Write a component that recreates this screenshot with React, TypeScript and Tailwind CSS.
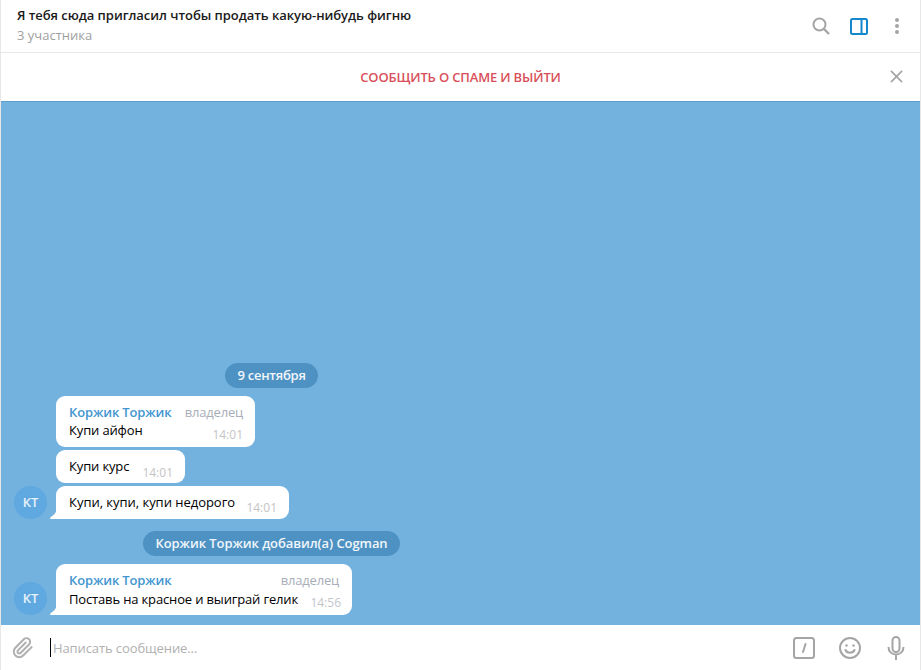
function Tail() {
  return (
    <svg className="absolute bottom-0 left-[-6px]" width="7" height="10" viewBox="0 0 7 10">
      <path d="M7 0 V10 H1.5 C0 10 -0.3 9 0.6 8.3 C4 6 6 4 7 0 Z" fill="#fff" />
    </svg>
  );
}

function Avatar() {
  return (
    <div className="flex h-[33px] w-[33px] shrink-0 items-center justify-center rounded-full bg-[#5fa8e0] pt-px text-[13px] font-semibold text-[#e8f3fb]">
      КТ
    </div>
  );
}

function Pill({ children, className = "" }: { children: React.ReactNode; className?: string }) {
  return (
    <div className={`flex h-[25px] items-center rounded-full bg-[#4e92c3] px-3 text-[13px] font-semibold text-[#f0f6fb] ${className}`}>
      {children}
    </div>
  );
}

function NameRow() {
  return (
    <div className="flex h-[19px] items-center justify-between text-[13px] leading-[19px]">
      <span className="font-semibold tracking-[-0.15px] text-[#3f96d0]">Коржик Торжик</span>
      <span className="tracking-[-0.2px] text-[#a8aeb8]">владелец</span>
    </div>
  );
}

export default function App() {
  return (
    <div className="flex h-[670px] w-[921px] flex-col overflow-hidden border-x border-[#e7e7e7] bg-white font-['Open_Sans',sans-serif]">
      {/* Header */}
      <div className="flex h-[53px] shrink-0 items-center justify-between border-b border-[#e7e7e7] pl-[15px] pr-[15px]">
        <div className="pb-[4px] pl-px">
          <div className="text-[13px] font-semibold leading-[20px] tracking-[-0.05px] text-[#1a1a1a]">
            Я тебя сюда пригласил чтобы продать какую-нибудь фигню
          </div>
          <div className="mt-[1px] text-[13px] leading-[18px] text-[#a0a0a0]">3 участника</div>
        </div>
        <div className="flex items-center gap-[19px]">
          <svg width="20" height="20" viewBox="0 0 20 20" fill="none" stroke="#a5a5a5" strokeWidth="2">
            <circle cx="8.5" cy="8.5" r="6" />
            <path d="M13 13 L18 18" strokeWidth="2.4" />
          </svg>
          <svg width="18" height="17" viewBox="0 0 18 17" fill="none" stroke="#1488cc" strokeWidth="2">
            <rect x="1" y="1" width="16" height="15" rx="1.5" />
            <path d="M11.5 1 V16" />
          </svg>
          <svg className="ml-[2px]" width="16" height="18" viewBox="0 0 16 18" fill="#a5a5a5">
            <circle cx="8" cy="3" r="2" />
            <circle cx="8" cy="9" r="2" />
            <circle cx="8" cy="15" r="2" />
          </svg>
        </div>
      </div>

      {/* Spam banner */}
      <div className="relative flex h-[48px] shrink-0 items-center justify-center">
        <span className="pt-[1px] text-[13px] font-semibold tracking-[-0.16px] text-[#d9505a]">СООБЩИТЬ О СПАМЕ И ВЫЙТИ</span>
        <svg className="absolute right-[17px] top-[17px]" width="13" height="13" viewBox="0 0 14 14" stroke="#a5a5a5" strokeWidth="1.8">
          <path d="M1 1 L13 13 M13 1 L1 13" />
        </svg>
      </div>

      {/* Chat */}
      <div className="flex min-h-0 flex-1 flex-col justify-end border-t border-[#5f9cc9] bg-[#73b2df] pb-[10px]">
        <div className="flex w-[541px] flex-col items-center">
          <Pill className="tracking-[-0.25px]">9 сентября</Pill>

          <div className="mt-2 flex w-full flex-col items-start gap-[3px] pl-[55px]">
            <div className="h-[51px] w-[199px] rounded-[9px] bg-white pl-[13px] pr-[12px] pt-[7px]">
              <NameRow />
              <div className="relative mt-[-1px] text-[13px] leading-[18px] tracking-[-0.15px] text-black">
                Купи айфон
                <span className="absolute right-0 top-[5px] text-[12px] tracking-normal text-[#c4c4c4]">14:01</span>
              </div>
            </div>
            <div className="flex h-[33px] w-[129px] items-start justify-between rounded-[9px] bg-white pl-[13px] pr-[12px] pt-[7px] text-[13px] leading-[18px] tracking-[-0.15px] text-black">
              <span>Купи курс</span>
              <span className="mt-[7px] text-[12px] leading-[18px] tracking-normal text-[#c4c4c4]">14:01</span>
            </div>
          </div>

          <div className="mt-[3px] flex w-full items-end gap-[9px] pl-[13px]">
            <Avatar />
            <div className="relative flex h-[33px] w-[233px] items-start justify-between rounded-[9px] rounded-bl-none bg-white pl-[13px] pr-[12px] pt-[7px] text-[13px] leading-[18px] tracking-[-0.03px] text-black">
              <Tail />
              <span>Купи, купи, купи недорого</span>
              <span className="mt-[6px] text-[12px] leading-[18px] tracking-normal text-[#c4c4c4]">14:01</span>
            </div>
          </div>

          <div className="mt-3">
            <Pill className="tracking-[-0.08px]">Коржик Торжик добавил(а) Cogman</Pill>
          </div>

          <div className="mt-2 flex w-full items-end gap-[9px] pl-[13px]">
            <Avatar />
            <div className="relative h-[51px] w-[296px] rounded-[9px] rounded-bl-none bg-white pl-[13px] pr-[13px] pt-[7px]">
              <Tail />
              <NameRow />
              <div className="relative text-[13px] leading-[18px] tracking-[-0.15px] text-black">
                Поставь на красное и выиграй гелик
                <span className="absolute right-[-2px] top-[4px] text-[12px] tracking-normal text-[#bfc5cc]">14:56</span>
              </div>
            </div>
          </div>
        </div>
      </div>

      {/* Composer */}
      <div className="flex h-[45px] shrink-0 items-center justify-between pl-[11px] pr-[15px]">
        <div className="flex items-center">
          <svg width="22" height="24" viewBox="0 0 24 24" fill="none" stroke="#b0b0b0" strokeWidth="2.2" strokeLinecap="round" strokeLinejoin="round">
            <path d="M21.4 11.05 12.2 20.25a6 6 0 0 1-8.5-8.5l9.2-9.2a4 4 0 0 1 5.66 5.66l-9.2 9.2a2 2 0 0 1-2.83-2.83l8.5-8.5" />
          </svg>
          <div className="ml-[16px] h-[19px] w-px bg-black" />
          <span className="ml-[2px] pt-[2px] text-[13px] tracking-[-0.1px] text-[#b0b0b0]">Написать сообщение...</span>
        </div>
        <div className="flex items-center">
          <svg width="22" height="22" viewBox="0 0 22 22" fill="none" stroke="#a5a5a5" strokeWidth="2">
            <rect x="1" y="1" width="20" height="20" rx="2.5" />
            <path d="M12.5 7 L10 15" strokeLinecap="round" />
          </svg>
          <svg className="ml-[24px]" width="22" height="22" viewBox="0 0 22 22" fill="none" stroke="#a5a5a5" strokeWidth="2">
            <circle cx="11" cy="11" r="10" />
            <circle cx="7.5" cy="8.5" r="1.2" fill="#a5a5a5" stroke="none" />
            <circle cx="14.5" cy="8.5" r="1.2" fill="#a5a5a5" stroke="none" />
            <path d="M6.5 13 C8 16.5 14 16.5 15.5 13" strokeLinecap="round" />
          </svg>
          <svg className="ml-[26px]" width="18" height="24" viewBox="0 0 18 24" fill="none" stroke="#a5a5a5" strokeWidth="2">
            <rect x="5.5" y="1" width="7" height="15" rx="3.5" />
            <path d="M1.5 11 C1.5 21 16.5 21 16.5 11 M9 19 V24" />
          </svg>
        </div>
      </div>
    </div>
  );
}
